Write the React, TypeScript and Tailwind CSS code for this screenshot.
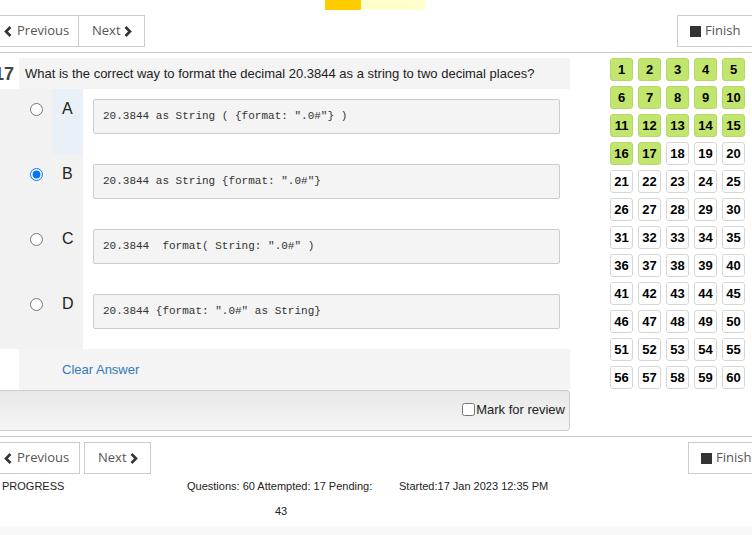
import React from 'react';

const options = [
  { key: 'A', code: '20.3844 as String ( {format: ".0#"} )', active: true },
  { key: 'B', code: '20.3844 as String {format: ".0#"}', checked: true },
  { key: 'C', code: '20.3844  format( String: ".0#" )' },
  { key: 'D', code: '20.3844 {format: ".0#" as String}' },
];

function Chevron({ dir }: { dir: 'left' | 'right' }) {
  return (
    <svg width="8" height="11" viewBox="0 0 8 11" className="shrink-0">
      <polyline
        points={dir === 'left' ? '6.5,1 2,5.5 6.5,10' : '1.5,1 6,5.5 1.5,10'}
        fill="none"
        stroke="#333"
        strokeWidth="2.6"
      />
    </svg>
  );
}

function NavRow({ bottom }: { bottom?: boolean }) {
  return (
    <div className="flex items-center justify-between h-[32px] font-['Open_Sans',sans-serif] text-[13px] text-[#555]">
      <div className={`flex h-full ${bottom ? 'gap-[4px]' : ''}`}>
        <button
          className={`h-full flex items-center gap-[5px] border border-l-0 border-[#ccc] bg-white pl-[4px] ${
            bottom ? 'w-[80px]' : 'w-[79px]'
          }`}
        >
          <Chevron dir="left" />
          <span>Previous</span>
        </button>
        <button
          className={`h-full flex items-center gap-[3px] border border-[#ccc] bg-white pl-[13px] ${
            bottom ? 'w-[67px]' : 'w-[66px] border-l-0'
          }`}
        >
          <span>Next</span>
          <Chevron dir="right" />
        </button>
      </div>
      <button
        className={`h-full flex items-center gap-[4px] border border-r-0 border-[#ccc] bg-white ${
          bottom ? 'w-[64px] pl-[12px]' : 'w-[75px] pl-[12px]'
        }`}
      >
        <span className="w-[11px] h-[11px] bg-[#333] inline-block" />
        <span>Finish</span>
      </button>
    </div>
  );
}

export default function App() {
  const answered = 17;
  return (
    <div className="w-[752px] h-[535px] overflow-hidden bg-white relative font-['Liberation_Sans',Arial,sans-serif] text-[#222]">
      {/* progress strip */}
      <div className="flex h-[10px]">
        <div className="ml-[325px] w-[36px] bg-[#ffcc00]" />
        <div className="w-[64px] bg-[#ffffcc]" />
      </div>

      <div className="mt-[5px]">
        <NavRow />
      </div>
      <div className="mt-[5px] border-t border-[#ccc]" />

      <div className="flex mt-[5px]">
        {/* question area */}
        <div className="w-[570px] shrink-0">
          <div className="flex h-[31px]">
            <div className="w-[19px] flex justify-end items-center pr-[5px] text-[18px] font-bold text-[#444] leading-none">
              17
            </div>
            <div className="flex-1 bg-[#f4f4f4] flex items-center pl-[6px] text-[13px]">
              What is the correct way to format the decimal 20.3844 as a string to two decimal places?
            </div>
          </div>

          {options.map((o) => (
            <div key={o.key} className="flex h-[65px]">
              <div className="w-[52px] bg-[#f2f2f2] pl-[30px] pt-[14px]">
                <input
                  type="radio"
                  name="ans"
                  defaultChecked={o.checked}
                  className="m-0 w-[13px] h-[13px] block"
                />
              </div>
              <div
                className={`w-[31px] pl-[10px] pt-[8px] text-[16px] ${
                  o.active ? 'bg-[#e9f0f7]' : 'bg-[#f2f2f2]'
                }`}
              >
                {o.key}
              </div>
              <div className="flex-1 pl-[10px] pt-[10px]">
                <div className="w-[467px] h-[35px] bg-[#f4f4f4] border border-[#ccc] rounded-[2px] flex items-center pl-[9px] font-['Liberation_Mono',monospace] text-[11px] text-[#333] whitespace-pre">
                  {o.code}
                </div>
              </div>
            </div>
          ))}

          <div className="ml-[19px] h-[41px] bg-[#f4f4f4] flex items-center pl-[43px] text-[13px] text-[#337ab7]">
            Clear Answer
          </div>

          <div className="h-[41px] border border-l-0 border-[#ccc] rounded-r-[4px] bg-gradient-to-b from-[#e8e8e8] to-[#f5f5f5] flex items-start justify-end pt-[9px] pr-[4px] text-[13px]">
            <label className="flex items-center">
              <input type="checkbox" className="m-0 mr-[1px] w-[13px] h-[13px]" />
              Mark for review
            </label>
          </div>
        </div>

        {/* question palette */}
        <div className="ml-[40px] grid grid-cols-5 gap-[5px] content-start">
          {Array.from({ length: 60 }, (_, i) => i + 1).map((n) => (
            <div
              key={n}
              className={`w-[23px] h-[23px] flex items-center justify-center rounded-[3px] border text-[13px] font-bold text-black ${
                n <= answered ? 'bg-[#c2e56e] border-[#b5d86a]' : 'bg-white border-[#d6d6d6]'
              }`}
            >
              {n}
            </div>
          ))}
        </div>
      </div>

      <div className="mt-[5px] border-t border-[#ccc]" />
      <div className="mt-[5px]">
        <NavRow bottom />
      </div>

      <div className="flex text-[11px] mt-[6px] h-[12px] leading-[12px]">
        <div className="w-[187px] pl-[2px]">PROGRESS</div>
        <div className="w-[212px]">Questions: 60 Attempted: 17 Pending:</div>
        <div>Started:17 Jan 2023 12:35 PM</div>
      </div>
      <div className="text-[11px] pl-[275px] mt-[13px] leading-[12px]">43</div>
      <div className="absolute left-0 right-0 bottom-0 h-[9px] bg-[#f8f8f8]" />
    </div>
  );
}
